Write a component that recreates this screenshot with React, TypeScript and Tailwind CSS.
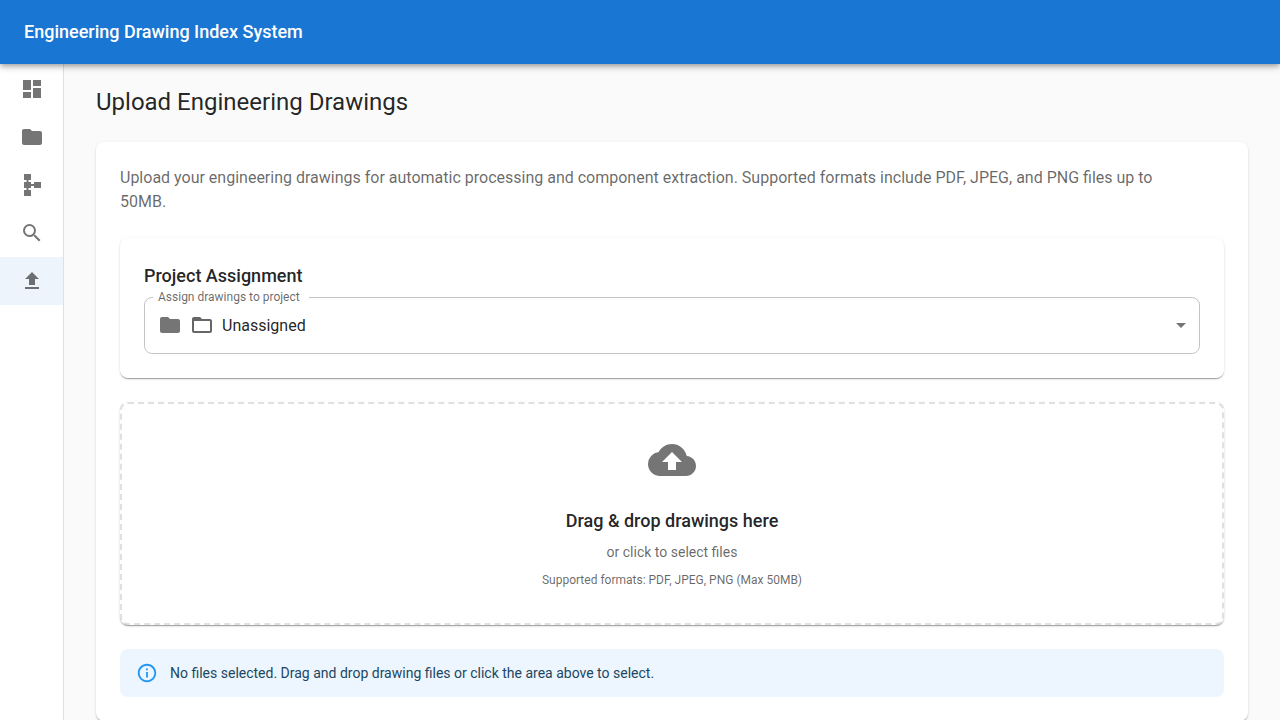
import { useState } from "react";
import type { ReactNode } from "react";
import {
  MdArrowDropDown,
  MdCloudUpload,
  MdDashboard,
  MdFolder,
  MdFolderOpen,
  MdInfoOutline,
  MdSchema,
  MdSearch,
  MdUpload,
} from "react-icons/md";

const navItems = [
  { label: "Dashboard", href: "#dashboard", Icon: MdDashboard },
  { label: "Projects", href: "#projects", Icon: MdFolder },
  { label: "Flows", href: "#flows", Icon: MdSchema },
  { label: "Search", href: "#search", Icon: MdSearch },
  { label: "Upload", href: "#upload", Icon: MdUpload, active: true },
];

const paper =
  "rounded-lg bg-white shadow-[0_2px_1px_-1px_rgba(0,0,0,0.2),0_1px_1px_0_rgba(0,0,0,0.14),0_1px_3px_0_rgba(0,0,0,0.12)]";

function Header() {
  return (
    <header className="sticky top-0 z-20 flex h-16 items-center bg-[#1976d2] px-6 shadow-[0_2px_4px_-1px_rgba(0,0,0,0.2),0_4px_5px_0_rgba(0,0,0,0.14),0_1px_10px_0_rgba(0,0,0,0.12)]">
      <div className="text-lg font-medium text-white">Engineering Drawing Index System</div>
    </header>
  );
}

function Sidebar() {
  return (
    <nav
      aria-label="Main"
      className="w-16 shrink-0 border-r border-black/12 bg-white pt-px"
    >
      <ul>
        {navItems.map(({ label, href, Icon, active }) => (
          <li key={label}>
            <a
              href={href}
              aria-label={label}
              aria-current={active ? "page" : undefined}
              className={
                active
                  ? "flex h-12 items-center bg-[#1976d2]/8 px-5"
                  : "flex h-12 items-center px-5 hover:bg-black/4"
              }
            >
              <Icon className="size-6 shrink-0 text-black/54" />
            </a>
          </li>
        ))}
      </ul>
    </nav>
  );
}

function Paper({ children }: { children: ReactNode }) {
  return <section className={`${paper} p-6`}>{children}</section>;
}

function ProjectAssignment() {
  const [project, setProject] = useState("unassigned");
  return (
    <Paper>
      <h2 className="mb-[7px] text-lg leading-7 font-medium">Project Assignment</h2>
      <div className="relative">
        <select
          id="project"
          value={project}
          onChange={(e) => setProject(e.target.value)}
          className="block h-[57px] w-full appearance-none rounded-lg border border-black/23 bg-transparent pr-8 pl-[77px] text-base outline-[#1976d2]"
        >
          <option value="unassigned">Unassigned</option>
        </select>
        <label
          htmlFor="project"
          className="absolute -top-2 left-[9px] bg-white pr-[9px] pl-[5px] text-xs text-black/60"
        >
          Assign drawings to project
        </label>
        <div className="pointer-events-none absolute top-4 left-3.5 flex items-center gap-2 text-black/54">
          <MdFolder className="size-6" />
          <MdFolderOpen className="size-6 text-black/60" />
        </div>
        <MdArrowDropDown className="pointer-events-none absolute top-4 right-[7px] size-6 text-black/54" />
      </div>
    </Paper>
  );
}

function DropZone() {
  return (
    <label
      className={`${paper} flex cursor-pointer flex-col items-center border-2 border-dashed border-[#e0e0e0] p-8 text-center`}
    >
      <input type="file" multiple accept=".pdf,.jpg,.jpeg,.png" className="sr-only" />
      <MdCloudUpload className="mb-6 size-12 text-black/54" />
      <span className="mb-2 text-lg leading-[26px] font-medium">Drag &amp; drop drawings here</span>
      <span className="mb-2 text-sm leading-5 text-black/60">or click to select files</span>
      <span className="text-xs leading-[21px] text-black/60">
        Supported formats: PDF, JPEG, PNG (Max 50MB)
      </span>
    </label>
  );
}

function InfoAlert() {
  return (
    <div
      role="status"
      className="flex h-12 items-center gap-3 rounded-lg bg-[#edf6fe] px-4 text-sm text-[#214662]"
    >
      <MdInfoOutline className="size-[22px] shrink-0 text-[#2196f3]" />
      No files selected. Drag and drop drawing files or click the area above to select.
    </div>
  );
}

export default function App() {
  return (
    <div className="flex min-h-screen flex-col bg-[#fafafa] font-['Roboto',sans-serif] text-black/87">
      <Header />
      <div className="flex grow">
        <Sidebar />
        <main className="min-w-0 grow px-8 py-6">
          <h1 className="mb-[26px] text-2xl leading-7">Upload Engineering Drawings</h1>
          <Paper>
            <div className="flex flex-col gap-6">
              <p className="text-base text-black/60">
                Upload your engineering drawings for automatic processing and component
                extraction. Supported formats include PDF, JPEG, and PNG files up to{" "}
                <br className="hidden xl:inline" />
                50MB.
              </p>
              <ProjectAssignment />
              <DropZone />
              <InfoAlert />
            </div>
          </Paper>
        </main>
      </div>
    </div>
  );
}
